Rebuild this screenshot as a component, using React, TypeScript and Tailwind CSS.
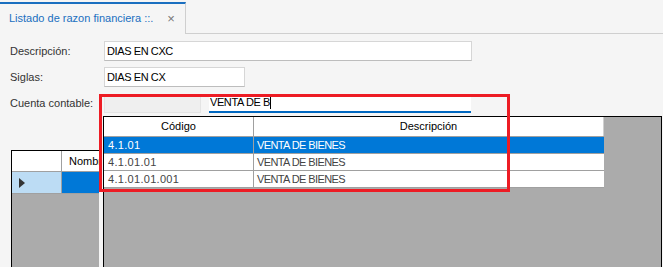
const rows = [
  { code: "4.1.01", desc: "VENTA DE BIENES", selected: true },
  { code: "4.1.01.01", desc: "VENTA DE BIENES", selected: false },
  { code: "4.1.01.01.001", desc: "VENTA DE BIENES", selected: false },
];

function Field({ label, value, width }: { label: string; value: string; width: string }) {
  return (
    <div className="flex items-center h-[20px]">
      <span className="w-[94px] text-[#333]">{label}</span>
      <div className={`${width} h-[20px] bg-white border border-[#d6d6d6] border-b-[#bdbdbd] flex items-center pl-[2px] text-black tracking-[-0.4px]`}>
        {value}
      </div>
    </div>
  );
}

export default function App() {
  return (
    <div
      className="relative w-[663px] h-[267px] overflow-hidden bg-[#f5f5f5] text-[11px]"
      style={{ fontFamily: '"Liberation Sans", Arial, sans-serif' }}
    >
      {/* tab strip */}
      <div className="flex h-[34px] pt-[2px]">
        <div className="w-[186px] border-t-2 border-t-[#1a6fc0] border-r border-r-[#cfcfcf] flex items-center pl-[9px] pb-[1px]">
          <span className="text-[#1a6fc0]">Listado de razon financiera ::.</span>
          <span className="ml-[14px] text-[#777] text-[13px] leading-none">×</span>
        </div>
        <div className="flex-1 border-b border-b-[#cfcfcf]" />
      </div>

      {/* form */}
      <div className="pl-[10px] pt-[7px] flex flex-col gap-[6px]">
        <Field label="Descripción:" value="DIAS EN CXC" width="w-[368px]" />
        <Field label="Siglas:" value="DIAS EN CX" width="w-[141px]" />
        <div className="flex items-center h-[19px] mt-[1px]">
          <span className="w-[94px] text-[#333]">Cuenta contable:</span>
          <div className="w-[97px] h-[18px] bg-[#efefef] border border-[#e4e4e4]" />
          <div className="ml-[8px] w-[262px] h-[19px] bg-white border-b-2 border-b-[#0067c0] flex items-center pl-[1px] text-black tracking-[-0.4px]">
            VENTA DE B<span className="w-px h-[13px] bg-black" />
          </div>
        </div>
      </div>

      {/* background grid */}
      <div className="ml-[11px] mt-[37px] w-[640px] h-[130px] border border-black bg-[#ababab]">
        <div className="flex h-[21px] bg-white border-b border-b-[#a0a0a0]">
          <div className="w-[50px] border-r border-r-[#a0a0a0]" />
          <div className="pl-[7px] flex items-center text-black">Nombre</div>
        </div>
        <div className="flex h-[22px] border-b border-b-[#a0a0a0]">
          <div className="w-[50px] bg-[#bcdcf4] border-r border-r-[#a0a0a0] flex items-center pl-[7px]">
            <svg width="6" height="10" viewBox="0 0 6 10">
              <path d="M0 0 L6 5 L0 10 Z" fill="#333" />
            </svg>
          </div>
          <div className="flex-1 bg-[#0078d7]" />
        </div>
      </div>

      {/* lookup popup */}
      <div className="absolute left-[99px] top-[116px] right-0 bottom-0 bg-[#f5f5f5] pl-[4px]">
        <div className="w-[559px] h-[160px] border border-black bg-[#ababab]">
          <div className="w-[500px] bg-white">
            <div className="flex h-[20px] border-b border-b-[#a0a0a0] text-black">
              <div className="w-[150px] border-r border-r-[#a0a0a0] flex items-center justify-center">Código</div>
              <div className="flex-1 border-r border-r-[#d0d0d0] flex items-center justify-center">Descripción</div>
            </div>
            {rows.map((r) => (
              <div
                key={r.code}
                className={`flex h-[17px] border-b border-b-[#a0a0a0] ${r.selected ? "bg-[#0078d7] text-white" : "bg-white text-[#444]"}`}
              >
                <div className="w-[150px] border-r border-r-[#a0a0a0] flex items-center pl-[4px] tracking-[0.3px]">{r.code}</div>
                <div className="flex-1 flex items-center pl-[3px] tracking-[-0.6px]">{r.desc}</div>
              </div>
            ))}
          </div>
        </div>
      </div>

      {/* annotation */}
      <div className="absolute left-[99px] top-[94px] w-[411px] h-[98px] border-[3px] border-[#ed1c24]" />
    </div>
  );
}
